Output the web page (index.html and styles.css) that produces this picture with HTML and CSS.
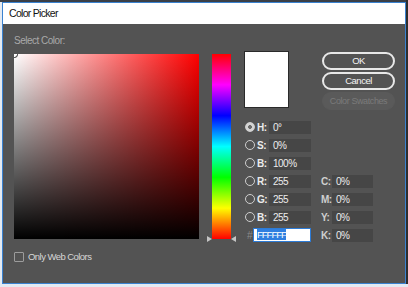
FILE: index.html
```html
<!DOCTYPE html>
<html>
<head>
<meta charset="utf-8">
<link rel="stylesheet" href="styles.css">
</head>
<body>
<div class="window">
  <div class="titlebar">Color Picker</div>
  <div class="content">
    <div class="caption">Select Color:</div>
    <div class="main">
      <div class="left">
        <div class="field"><span class="picker"></span></div>
        <div class="webonly"><span class="check"></span><span>Only Web Colors</span></div>
      </div>
      <div class="hue"><span class="arrow arrow-l"></span><span class="arrow arrow-r"></span></div>
      <div class="panel">
        <div class="top">
          <div class="swatch"></div>
          <div class="buttons">
            <button class="btn">OK</button>
            <button class="btn">Cancel</button>
            <button class="btn btn-disabled">Color Swatches</button>
          </div>
        </div>
        <div class="fields">
          <span class="radio on"></span><span class="lbl">H:</span><span class="inp">0°</span><span></span><span></span><span></span>
          <span class="radio"></span><span class="lbl">S:</span><span class="inp">0%</span><span></span><span></span><span></span>
          <span class="radio"></span><span class="lbl">B:</span><span class="inp">100%</span><span></span><span></span><span></span>
          <span class="radio"></span><span class="lbl">R:</span><span class="inp">255</span><span></span><span class="lbl2">C:</span><span class="inp">0%</span>
          <span class="radio"></span><span class="lbl">G:</span><span class="inp">255</span><span></span><span class="lbl2">M:</span><span class="inp">0%</span>
          <span class="radio"></span><span class="lbl">B:</span><span class="inp">255</span><span></span><span class="lbl2">Y:</span><span class="inp">0%</span>
          <span class="hash">#</span><span class="hex"><span class="sel">FFFFFF</span></span><span></span><span class="lbl2">K:</span><span class="inp">0%</span>
        </div>
      </div>
    </div>
  </div>
</div>
</body>
</html>
```
FILE: styles.css
```css
html, body {
  margin: 0;
  padding: 0;
}
body {
  width: 408px;
  height: 287px;
  overflow: hidden;
  background:
    linear-gradient(to left, #2e2e2e 0 2px, transparent 2px) 0 0 / 100% 284px no-repeat,
    linear-gradient(#3b3f47 0 2px, #e4eaf2 2px);
  font-family: "Liberation Sans", Arial, sans-serif;
}
.window {
  margin: 2px 0 0 2px;
  width: 402px;
  height: 280px;
  border: 1px solid #3a82d0;
  display: flex;
  flex-direction: column;
  background: #535353;
}
.titlebar {
  height: 21px;
  flex: none;
  background: #fff;
  color: #111;
  font-size: 10.5px;
  letter-spacing: -0.7px;
  line-height: 21px;
  padding-left: 6px;
}
.content {
  flex: 1;
  padding: 10px 0 0 11px;
}
.caption {
  color: #a9a9a9;
  font-size: 10px;
  letter-spacing: -0.5px;
  line-height: 14px;
  margin-bottom: 3px;
}
.main {
  display: flex;
  align-items: flex-start;
}
.left {
  width: 185px;
  margin-top: 3px;
}
.field {
  position: relative;
  width: 185px;
  height: 185px;
  overflow: hidden;
  background: linear-gradient(to top, #000, rgba(0,0,0,0)), linear-gradient(to right, #fff, #f00);
}
.picker {
  position: absolute;
  left: -3px;
  top: -3px;
  width: 5px;
  height: 5px;
  border-radius: 50%;
  border: 1px solid #222;
  box-shadow: inset 0 0 0 1px #fff;
}
.webonly {
  display: flex;
  align-items: center;
  margin-top: 12px;
  color: #d6d6d6;
  font-size: 9.5px;
  letter-spacing: -0.55px;
  line-height: 12px;
}
.check {
  width: 8px;
  height: 8px;
  border: 1px solid #9c9c9c;
  border-radius: 1px;
  margin-right: 4px;
}
.hue {
  position: relative;
  width: 19px;
  height: 185px;
  margin: 3px 0 0 13px;
  background: linear-gradient(to bottom, #f00 0%, #f0f 16.67%, #00f 33.33%, #0ff 50%, #0f0 66.67%, #ff0 83.33%, #f00 100%);
}
.arrow {
  position: absolute;
  bottom: -3px;
  width: 0;
  height: 0;
  border-top: 3px solid transparent;
  border-bottom: 3px solid transparent;
}
.arrow-l {
  left: -5px;
  border-left: 5px solid #c4c4c4;
}
.arrow-r {
  right: -5px;
  border-right: 5px solid #c4c4c4;
}
.panel {
  margin-left: 13px;
  width: 161px;
}
.top {
  display: flex;
  align-items: flex-start;
}
.swatch {
  width: 43px;
  height: 55px;
  background: #fff;
  border: 1px solid #2a2a2a;
}
.buttons {
  margin: 1px 0 0 33px;
  display: flex;
  flex-direction: column;
  gap: 2px;
}
.btn {
  width: 73px;
  height: 18px;
  border: 2px solid #e8e8e8;
  border-radius: 9px;
  background: #535353;
  color: #f4f4f4;
  font-family: inherit;
  font-size: 9.5px;
  letter-spacing: -0.5px;
  padding: 0;
  line-height: 14px;
}
.btn-disabled {
  border: 1px solid #5a5a5a;
  background: #5a5a5a;
  color: #7b7b7b;
  font-size: 9px;
  letter-spacing: -0.4px;
}
.fields {
  margin-top: 8px;
  display: grid;
  grid-template-columns: 13px 12px 42px 10px 11px 41px;
  grid-auto-rows: 18px;
  align-items: center;
  font-size: 10px;
  letter-spacing: -0.5px;
}
.radio {
  width: 8px;
  height: 8px;
  margin-left: 1px;
  border: 1px solid #cfcfcf;
  border-radius: 50%;
  box-sizing: content-box;
}
.radio.on {
  background: radial-gradient(circle, #6a6a6a 0 1.6px, #d4d4d4 2.2px);
}
.lbl {
  color: #ececec;
  font-weight: bold;
}
.lbl2 {
  color: #cfcfcf;
  font-weight: bold;
}
.inp {
  height: 13px;
  line-height: 13px;
  background: #464646;
  color: #ececec;
  padding-left: 4px;
}
.hash {
  color: #8c8c8c;
  padding-left: 3px;
}
.hex {
  grid-column: span 2;
  justify-self: end;
  box-sizing: border-box;
  width: 58px;
  height: 14px;
  line-height: 12px;
  background: #fff;
  border: 1px solid #2d7bd6;
  padding-left: 3px;
  font-size: 9.5px;
  letter-spacing: -1px;
}
.sel {
  background: #2f7fe0;
  color: #fff;
}
```
